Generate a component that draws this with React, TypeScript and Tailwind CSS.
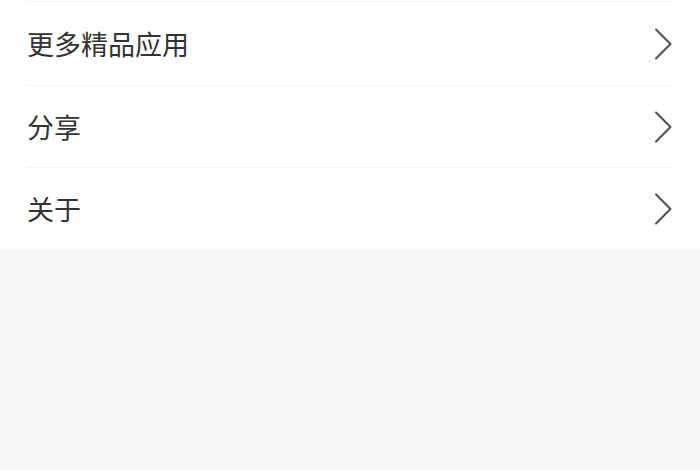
const items = ["更多精品应用", "分享", "关于"];

function Chevron() {
  return (
    <svg width="18" height="32" viewBox="0 0 18 32" fill="none" className="shrink-0">
      <path d="M2 1.5L16.5 16L2 30.5" stroke="#4d4d4d" strokeWidth="2" strokeLinecap="round" strokeLinejoin="round" />
    </svg>
  );
}

export default function App() {
  return (
    <div
      className="w-[700px] h-[470px] bg-[#f7f8f8] overflow-hidden"
      style={{ fontFamily: '"Noto Sans CJK SC", "Noto Sans", sans-serif' }}
    >
      <div className="bg-white pt-px">
        {items.map((label, i) => (
          <div
            key={label}
            className={`ml-[27px] mr-[28px] border-t border-[#f2f2f2] flex items-center justify-between ${i === 0 ? "h-[84px]" : "h-[82px]"}`}
          >
            <span className="text-[27px] leading-none text-[#333333]">{label}</span>
            <Chevron />
          </div>
        ))}
      </div>
    </div>
  );
}
